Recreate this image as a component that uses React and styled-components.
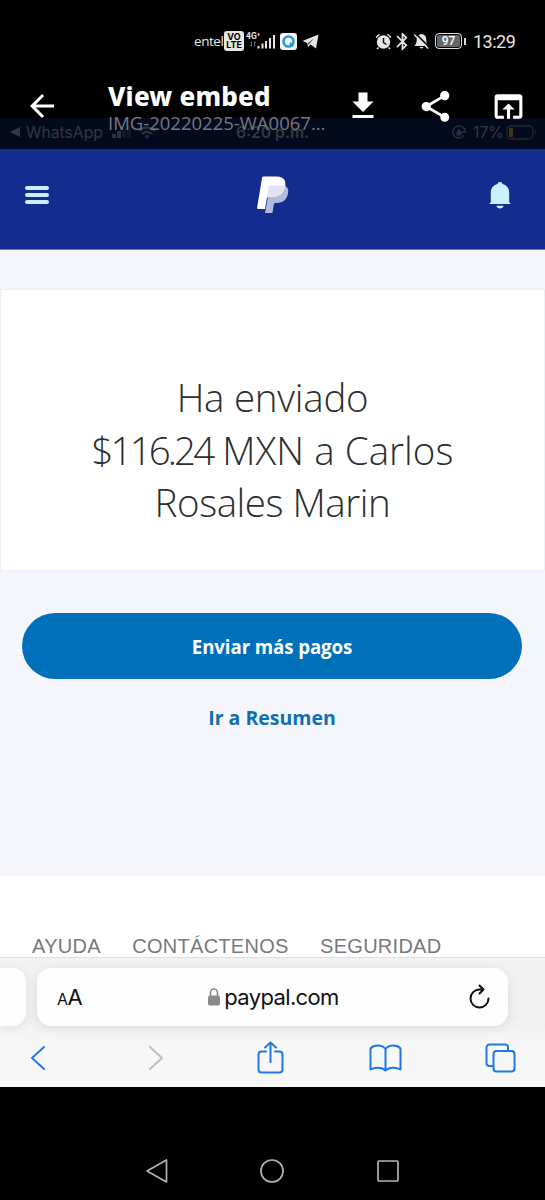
import React from "react";
import styled, { createGlobalStyle } from "styled-components";
import {
  MdArrowBack,
  MdBluetooth,
  MdDownload,
  MdOpenInBrowser,
  MdShare,
} from "react-icons/md";

const GlobalStyle = createGlobalStyle`
  * {
    box-sizing: border-box;
  }
  body {
    margin: 0;
    background: #000;
  }
  svg {
    display: block;
    flex: none;
  }
`;

const Screen = styled.div`
  position: relative;
  display: flex;
  flex-direction: column;
  width: 545px;
  height: 1200px;
  padding-top: 118px;
  overflow: hidden;
  background: #000;
  font-family: "Open Sans", "Noto Sans", sans-serif;
`;

// the viewer bar lies over the top of the opened image
const ViewerOverlay = styled.div`
  position: absolute;
  top: 0;
  left: 0;
  width: 545px;
  height: 149px;
`;

const StatusBar = styled.div`
  display: flex;
  align-items: center;
  height: 82px;
  padding: 0 30px 0 194px;
  color: #e6e6e6;
`;

const Carrier = styled.span`
  width: 30px;
  font-size: 13.5px;
  letter-spacing: -0.45px;
  white-space: nowrap;
`;

const VoLte = styled.div`
  display: flex;
  flex-direction: column;
  align-items: center;
  justify-content: center;
  width: 20px;
  height: 20px;
  border-radius: 3px;
  background: #e6e6e6;
  color: #000;
  font: 700 9px/8.5px "Inter", sans-serif;
`;

const Signal = styled.svg`
  margin-left: 2px;
`;

const Network = styled.text`
  font: 700 8.5px "Roboto", sans-serif;
  fill: #e6e6e6;
`;

const AppBadge = styled.svg`
  margin: 0 5px 0 4px;
`;

const StatusRight = styled.div`
  display: flex;
  align-items: center;
  margin-left: auto;
`;

const Battery = styled.div`
  position: relative;
  display: flex;
  align-items: center;
  justify-content: center;
  width: 27px;
  height: 16px;
  margin: 0 11px 0 5px;
  border: 1.5px solid #dcdcdc;
  border-radius: 4px;
  background: #666;
  box-shadow: inset 0 0 0 1px #000;
  color: #fff;
  font: 500 12px "Roboto", sans-serif;

  &::after {
    content: "";
    position: absolute;
    right: -4.5px;
    width: 2px;
    height: 7px;
    background: #dcdcdc;
  }
`;

const Clock = styled.span`
  width: 42px;
  font: 400 18px "Roboto", sans-serif;
  letter-spacing: -0.5px;
`;

const ViewerBar = styled.div`
  display: flex;
  align-items: flex-start;
  padding: 0 18px 0 24px;
  color: #fff;
`;

const BarIcon = styled.span`
  margin: 5.5px ${({ $gap }) => $gap || 0}px 0 0;
`;

const FileInfo = styled.div`
  width: 238px;
  margin-left: 48px;
`;

const ViewerTitle = styled.div`
  font-family: "Noto Sans", sans-serif;
  font-size: 26px;
  line-height: 29px;
  font-weight: 800;
  letter-spacing: 0.2px;
  white-space: nowrap;
`;

const FileName = styled.div`
  color: #76777c;
  font-size: 18.5px;
  line-height: 24px;
  white-space: nowrap;
`;

const PhoneStrip = styled.div`
  display: flex;
  align-items: center;
  height: 31px;
  flex: none;
  padding: 0 8px 3px 10px;
  background: #040a1e;
  color: #353740;
  font: 500 15.7px "Inter", sans-serif;
`;

const StripText = styled.span`
  width: ${({ $width }) => $width}px;
  margin-left: ${({ $left }) => $left || 0}px;
  font-weight: ${({ $bold }) => ($bold ? 600 : 400)};
  white-space: nowrap;
`;

const StripIcon = styled.svg`
  margin-left: ${({ $left }) => $left || 0}px;
`;

const PayPalHeader = styled.header`
  display: flex;
  align-items: center;
  justify-content: space-between;
  height: 101px;
  flex: none;
  padding: 0 34px 8px 25px;
  border-bottom: 1px solid #6f7dba;
  background: #142c8e;
`;

const Menu = styled.div`
  display: flex;
  flex-direction: column;
  gap: 2.5px;
  width: 24px;
`;

const MenuLine = styled.span`
  height: 4.3px;
  border-radius: 2px;
  background: #cdeffd;
`;

const Page = styled.main`
  display: flex;
  flex-direction: column;
  align-items: center;
  height: 626px;
  flex: none;
  padding-top: 39px;
  background: #f4f6fb;
`;

const Summary = styled.section`
  width: 100%;
  height: 282px;
  padding-top: 81px;
  border: 1px solid #eff0f3;
  background: #fff;
`;

const Heading = styled.h1`
  margin: 0;
  color: #2c2e2f;
  font-size: 38.5px;
  line-height: 52.6px;
  font-weight: 300;
  text-align: center;
`;

const HeadingLine = styled.span`
  display: block;
  letter-spacing: ${({ $spacing }) => $spacing}px;
  white-space: nowrap;
`;

const Amount = styled.span`
  letter-spacing: -2.9px;
`;

const SendButton = styled.button`
  width: 500px;
  height: 66px;
  margin: 42px 1px 0 0;
  padding: 1px 0 0;
  border: none;
  border-radius: 33px;
  background: #0070ba;
  color: #fff;
  font: 700 18.7px "Open Sans", sans-serif;
  letter-spacing: -0.1px;
`;

const SummaryLink = styled.a`
  margin: 25px 1px 0 0;
  color: #0f6fb1;
  font-size: 19.5px;
  line-height: 27px;
  font-weight: 700;
`;

const Footer = styled.footer`
  display: flex;
  align-items: flex-end;
  gap: 31.5px;
  height: 81px;
  flex: none;
  padding: 0 0 0 32px;
  background: #fff;
`;

const FooterLink = styled.a`
  color: #77797c;
  font: 400 20px/22px "Liberation Sans", sans-serif;
  letter-spacing: 0.27px;
`;

const Safari = styled.div`
  display: flex;
  flex-direction: column;
  height: 130px;
  flex: none;
  padding-top: 10px;
  border-top: 1px solid #dcdde0;
  background: linear-gradient(#f3f3f4, #f0f0f1 60px, #f7f7f8 85px);
`;

const TabRow = styled.div`
  display: flex;
  gap: 11px;
  height: 58px;
`;

const PreviousTab = styled.div`
  width: 26px;
  border-radius: 0 14px 14px 0;
  background: #fdfdfd;
  box-shadow: 0 2px 12px rgba(0, 0, 0, 0.07);
`;

const AddressBar = styled.div`
  display: flex;
  align-items: center;
  justify-content: space-between;
  width: 471px;
  padding: 0 18px 0 20px;
  border-radius: 14px;
  background: #fdfdfd;
  box-shadow: 0 2px 12px rgba(0, 0, 0, 0.09);
  color: #111;
  font: 400 22px "Inter", sans-serif;
`;

const TextSize = styled.span`
  width: 21px;
  letter-spacing: -0.5px;
  white-space: nowrap;

  small {
    font-size: 16px;
  }
`;

const Host = styled.span`
  display: flex;
  align-items: center;
  gap: 4px;
  letter-spacing: -0.65px;
`;

const Toolbar = styled.div`
  display: grid;
  grid-template-columns: repeat(5, 115.5px);
  align-items: center;
  justify-items: center;
  height: 61px;
  margin-left: -19.5px;
  padding-top: 2px;
`;

const Tool = styled.span`
  padding-left: ${({ $shift }) => $shift || 0}px;
`;

const AndroidNav = styled.nav`
  display: flex;
  justify-content: space-between;
  width: 254px;
  margin: 71px 0 0 145px;
`;

const LineIcon = ({ width, height, color = "#2079e8", children }) => (
  <svg
    width={width}
    height={height}
    viewBox={`0 0 ${width} ${height}`}
    fill="none"
    stroke={color}
    strokeWidth="2"
    strokeLinecap="round"
    strokeLinejoin="round"
  >
    {children}
  </svg>
);

const NavIcon = ({ children }) => (
  <svg width="24" height="26" fill="none" stroke="#b2b2b2" strokeWidth="1.7" strokeLinejoin="round">
    {children}
  </svg>
);

const PayPalLogo = () => (
  <svg width="32" height="38" viewBox="0 0 32 38">
    <path
      d="M13 9.500h14.500c3.500 1.500 4.200 4.500 3.500 8-1.200 6-5 9.500-11 9.500h-1.500c-1 0-1.500.5-1.700 1.500l-1.100 7c-.1 1-.6 1.500-1.500 1.500H8z"
      fill="#b3badf"
    />
    <path
      d="M6.500.5H20c6 0 9.300 3.500 8.300 9.500C27.300 17 22 21 15 21h-3.500c-1 0-1.500.5-1.700 1.500L8 33H1c-.8 0-1-.5-.9-1.200L5 2C5.200 1 5.600.5 6.500.5z"
      fill="#fff"
    />
    <path d="M13 9.500h15.300C27.300 17 22 21 15 21h-3.500c-1 0-1.500.5-1.700 1.500l-.3 1.500 2-13c.2-1 .6-1.500 1.500-1.500z" fill="#e2e4f2" />
  </svg>
);

const App = () => {
  return (
    <Screen>
      <GlobalStyle />
      <PhoneStrip>
        <svg width="10" height="12">
          <path d="M10 1v10L0 6z" fill="currentColor" />
        </svg>
        <StripText $left={6} $width={83}>WhatsApp</StripText>
        <StripIcon $left={3} width="20" height="12">
          <path d="M0 8h4v4H0zM5 5h4v7H5z" fill="#2f313a" />
          <path d="M10 2.500h4V12h-4zM15 0h4v12h-4z" fill="#10152a" />
        </StripIcon>
        <StripIcon $left={6} width="18" height="13" viewBox="0 0 18 13">
          <path d="M1 5q8-7 16 0M4 8q5-4.500 10 0" fill="none" stroke="#2f313a" strokeWidth="2.2" />
          <path d="M6.500 10q2.500-2 5 0L9 13z" fill="#2f313a" />
        </StripIcon>
        <StripText $left={80} $width={74} $bold>6:20 p.m.</StripText>
        <StripIcon $left={142} width="14" height="14" viewBox="0 0 14 14">
          <path d="M12 4a6 6 0 1 0 0 6M13 3v4h-3" fill="none" stroke="#2f313a" strokeWidth="1.300" />
          <path d="M4.500 6.500h5v4h-5zM5.500 6.500V5q1.500-2 3 0v1.500" fill="#2f313a" />
        </StripIcon>
        <StripText $left={7} $width={33}>17%</StripText>
        <svg width="31" height="15">
          <rect x="1" y="1" width="26" height="13" rx="4" fill="none" stroke="#24262d" strokeWidth="1.300" />
          <rect x="3" y="3" width="4" height="9" rx="1" fill="#433813" />
          <path d="M29 5q2 2.500 0 5z" fill="#24262d" />
        </svg>
      </PhoneStrip>

      <PayPalHeader>
        <Menu>
          <MenuLine />
          <MenuLine />
          <MenuLine />
        </Menu>
        <Tool $shift={8}>
          <PayPalLogo />
        </Tool>
        <svg width="22" height="27" viewBox="0 0 22 27" fill="#cdf0fe">
          <path d="M11 0c1.500 0 2.300.8 2.500 2 4.500 1.200 6.700 4.500 6.700 9v9c0 .8 1.300.8 1.300 2H.5c0-1.200 1.300-1.200 1.300-2v-9c0-4.500 2.200-7.800 6.700-9C8.700.8 9.500 0 11 0z" />
          <path d="M7.500 23.800h7c-.4 3.600-6.600 3.600-7 0z" />
        </svg>
      </PayPalHeader>

      <Page>
        <Summary>
          <Heading>
            <HeadingLine $spacing={-0.25}>Ha enviado</HeadingLine>
            <HeadingLine $spacing={0.05}>
              <Amount>$116.24</Amount> MXN a Carlos
            </HeadingLine>
            <HeadingLine $spacing={-0.45}>Rosales Marin</HeadingLine>
          </Heading>
        </Summary>
        <SendButton>Enviar más pagos</SendButton>
        <SummaryLink>Ir a Resumen</SummaryLink>
      </Page>

      <Footer>
        <FooterLink>AYUDA</FooterLink>
        <FooterLink>CONTÁCTENOS</FooterLink>
        <FooterLink>SEGURIDAD</FooterLink>
      </Footer>

      <Safari>
        <TabRow>
          <PreviousTab />
          <AddressBar>
            <TextSize>
              <small>A</small>A
            </TextSize>
            <Host>
              <svg width="12" height="18" viewBox="0 0 12 18">
                <path d="M2.500 8V4.500a3.500 3.500 0 0 1 7 0V8" fill="none" stroke="#8a8a8d" strokeWidth="1.600" />
                <rect y="7.500" width="12" height="10" rx="2" fill="#8a8a8d" />
              </svg>
              paypal.com
            </Host>
            <LineIcon width={21} height={27} color="#111">
              <path d="M19.500 14.500A9 9 0 1 1 10.500 5.500h3.500M10.500 1.500l4 4-4 4" />
            </LineIcon>
          </AddressBar>
        </TabRow>
        <Toolbar>
          <Tool>
            <LineIcon width={16} height={26}>
              <path d="M14 2L2 13l12 11" />
            </LineIcon>
          </Tool>
          <Tool $shift={5}>
            <LineIcon width={16} height={26} color="#bebec0">
              <path d="M2 2l12 11L2 24" />
            </LineIcon>
          </Tool>
          <Tool $shift={2}>
            <LineIcon width={27} height={33}>
              <path d="M9 10.500H4.500a3 3 0 0 0-3 3V28.500a3 3 0 0 0 3 3h18a3 3 0 0 0 3-3v-15a3 3 0 0 0-3-3H18M13.500 21V1.500M8 6.500l5.500-5 5.500 5" />
            </LineIcon>
          </Tool>
          <Tool $shift={1}>
            <LineIcon width={33} height={28}>
              <path d="M16.500 5v21.500C13 23 6 23 1.500 25.500V4.500C5 .5 13 .5 16.500 5zM16.500 5C20 .5 28 .5 31.500 4.500v21C27 23 20 23 16.500 26.500" />
            </LineIcon>
          </Tool>
          <Tool>
            <LineIcon width={31} height={30}>
              <path d="M8 23H4.500a3 3 0 0 1-3-3V4.500a3 3 0 0 1 3-3h15.500a3 3 0 0 1 3 3V8" />
              <rect x="8.500" y="8" width="21" height="20.500" rx="3" />
            </LineIcon>
          </Tool>
        </Toolbar>
      </Safari>

      <AndroidNav>
        <NavIcon>
          <path d="M21.500 2v22L2 13z" />
        </NavIcon>
        <NavIcon>
          <circle cx="12" cy="13" r="11" />
        </NavIcon>
        <NavIcon>
          <rect x="3" y="3" width="20" height="20" rx="1" />
        </NavIcon>
      </AndroidNav>

      <ViewerOverlay>
        <StatusBar>
          <Carrier>entel</Carrier>
          <VoLte>
            <span>VO</span>
            <span>LTE</span>
          </VoLte>
          <Signal width="30" height="20" viewBox="0 0 30 20" fill="#e6e6e6">
            <Network x="0" y="8">4G⁺</Network>
            <path d="M11.500 15h2v2.500h-2zM15.500 12.500h2v5h-2zM19 10h2v7.500h-2zM23 7h2v10.500h-2zM27 4h2v13.500h-2z" />
            <path d="M5.500 10.500v5M4 14l1.500 1.500M8.500 15.500v-5M10 12L8.500 10.500" stroke="#666" />
          </Signal>
          <AppBadge width="17" height="17" viewBox="0 0 17 17">
            <rect width="17" height="17" rx="3" fill="#f2f6f8" />
            <circle cx="8.500" cy="8.500" r="5" fill="none" stroke="#2897dc" strokeWidth="2.600" />
            <path d="M10 10l3 3" stroke="#2897dc" strokeWidth="2.500" />
          </AppBadge>
          <svg width="17" height="15" viewBox="0 0 17 15" fill="#e6e6e6">
            <path d="M.5 7L16.500.5 14 14.500 8.500 10.500 6 13 5.200 9z" />
            <path d="M6 9L12 4.500 7.200 9.700l-.7 1.300z" fill="#333" />
          </svg>
          <StatusRight>
            <svg width="17" height="17" viewBox="0 0 17 17">
              <circle cx="8.500" cy="9" r="6.700" fill="#e6e6e6" />
              <path d="M1 4.500L4.500 1.200M16 4.500L12.500 1.200M3.500 14.500L2 16M13.500 14.500L15 16" stroke="#e6e6e6" strokeWidth="1.500" />
              <path d="M8.500 5v4.500l3 2" fill="none" stroke="#111" strokeWidth="1.500" />
            </svg>
            <MdBluetooth size={21} />
            <svg width="17" height="17" viewBox="0 0 17 17">
              <path d="M8.500 1c3.500.5 4.800 2.500 4.800 5.500 0 3 .7 4.500 2.200 6.500h-14c1.500-2 2.200-3.500 2.200-6.500 0-3 1.300-5 4.800-5.500zM6.500 14h4q-2 3-4 0z" fill="#e6e6e6" />
              <path d="M2.500.5l14 14" stroke="#000" strokeWidth="1.600" />
              <path d="M1.200 1.500l14 14" stroke="#e6e6e6" strokeWidth="1.400" />
            </svg>
            <Battery>97</Battery>
            <Clock>13:29</Clock>
          </StatusRight>
        </StatusBar>
        <ViewerBar>
          <BarIcon>
            <MdArrowBack size={36} />
          </BarIcon>
          <FileInfo>
            <ViewerTitle>View embed</ViewerTitle>
            <FileName>IMG-20220225-WA0067...</FileName>
          </FileInfo>
          <BarIcon $gap={36}>
            <MdDownload size={36} />
          </BarIcon>
          <BarIcon $gap={36}>
            <MdShare size={37} />
          </BarIcon>
          <BarIcon>
            <MdOpenInBrowser size={37} />
          </BarIcon>
        </ViewerBar>
      </ViewerOverlay>
    </Screen>
  );
};

export default App;
